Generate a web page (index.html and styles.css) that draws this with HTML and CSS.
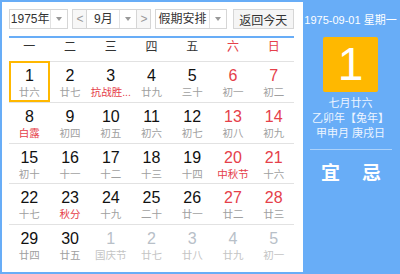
FILE: index.html
```html
<!DOCTYPE html>
<html lang="zh-CN">
<head>
    <meta charset="UTF-8">
    <title>万年历</title>
    <link rel="stylesheet" href="styles.css">
</head>
<body>
    <div class="calendar">
        <div class="main">
            <div class="toolbar">
                <div class="select year">
                    <span class="select-text">1975年</span>
                    <span class="select-arrow"><i></i></span>
                </div>
                <div class="month-group">
                    <span class="nav">&lt;</span>
                    <div class="select month">
                        <span class="select-text">9月</span>
                        <span class="select-arrow"><i></i></span>
                    </div>
                    <span class="nav">&gt;</span>
                </div>
                <div class="select holiday">
                    <span class="select-text">假期安排</span>
                    <span class="select-arrow"><i></i></span>
                </div>
                <button class="today-btn">返回今天</button>
            </div>
            <div class="weekdays">
                <span>一</span><span>二</span><span>三</span><span>四</span><span>五</span>
                <span class="red">六</span><span class="red">日</span>
            </div>
            <div class="days">
                <div class="day today"><b>1</b><small>廿六</small></div>
                <div class="day"><b>2</b><small>廿七</small></div>
                <div class="day"><b>3</b><small class="fest">抗战胜...</small></div>
                <div class="day"><b>4</b><small>廿九</small></div>
                <div class="day"><b>5</b><small>三十</small></div>
                <div class="day weekend"><b>6</b><small>初一</small></div>
                <div class="day weekend"><b>7</b><small>初二</small></div>

                <div class="day"><b>8</b><small class="fest">白露</small></div>
                <div class="day"><b>9</b><small>初四</small></div>
                <div class="day"><b>10</b><small>初五</small></div>
                <div class="day"><b>11</b><small>初六</small></div>
                <div class="day"><b>12</b><small>初七</small></div>
                <div class="day weekend"><b>13</b><small>初八</small></div>
                <div class="day weekend"><b>14</b><small>初九</small></div>

                <div class="day"><b>15</b><small>初十</small></div>
                <div class="day"><b>16</b><small>十一</small></div>
                <div class="day"><b>17</b><small>十二</small></div>
                <div class="day"><b>18</b><small>十三</small></div>
                <div class="day"><b>19</b><small>十四</small></div>
                <div class="day weekend"><b>20</b><small class="fest">中秋节</small></div>
                <div class="day weekend"><b>21</b><small>十六</small></div>

                <div class="day"><b>22</b><small>十七</small></div>
                <div class="day"><b>23</b><small class="fest">秋分</small></div>
                <div class="day"><b>24</b><small>十九</small></div>
                <div class="day"><b>25</b><small>二十</small></div>
                <div class="day"><b>26</b><small>廿一</small></div>
                <div class="day weekend"><b>27</b><small>廿二</small></div>
                <div class="day weekend"><b>28</b><small>廿三</small></div>

                <div class="day"><b>29</b><small>廿四</small></div>
                <div class="day"><b>30</b><small>廿五</small></div>
                <div class="day other"><b>1</b><small>国庆节</small></div>
                <div class="day other"><b>2</b><small>廿七</small></div>
                <div class="day other"><b>3</b><small>廿八</small></div>
                <div class="day other"><b>4</b><small>廿九</small></div>
                <div class="day other"><b>5</b><small>初一</small></div>
            </div>
        </div>
        <div class="side">
            <div class="side-date">1975-09-01 星期一</div>
            <div class="side-day">1</div>
            <div class="side-lunar">
                <p>七月廿六</p>
                <p>乙卯年【兔年】</p>
                <p>甲申月 庚戌日</p>
            </div>
            <div class="side-yiji">
                <span>宜</span>
                <span>忌</span>
            </div>
        </div>
    </div>
</body>
</html>
```
FILE: styles.css
```css
* {
    box-sizing: border-box;
}
body {
    margin: 0;
    font-family: "Liberation Sans", Arial, "Noto Sans CJK SC", sans-serif;
    background: #fff;
}
.calendar {
    display: flex;
    width: 400px;
    height: 274px;
    border: 2px solid #68adf7;
    background: #68adf7;
}
.main {
    width: 301px;
    background: #fff;
    padding: 7px 9px 0 7px;
}
.toolbar {
    display: flex;
    height: 29px;
    border-bottom: 2px solid #68adf7;
}
.select, .nav, .today-btn {
    height: 20px;
    border: 1px solid #d6d6d6;
    font-size: 12px;
    color: #333;
    background: #fff;
}
.select {
    display: flex;
}
.select-text {
    flex: 1;
    line-height: 18px;
    text-align: center;
}
.select-arrow {
    width: 17px;
    border-left: 1px solid #e2e2e2;
    display: flex;
    align-items: center;
    justify-content: center;
}
.select-arrow i {
    width: 0;
    height: 0;
    border-left: 3px solid transparent;
    border-right: 3px solid transparent;
    border-top: 4px solid #999;
}
.year {
    width: 60px;
}
.month-group {
    display: flex;
    margin-left: 4px;
}
.nav {
    width: 15px;
    line-height: 18px;
    text-align: center;
    color: #999;
    background: #f7f7f7;
}
.month {
    width: 49px;
    border-left: none;
    border-right: none;
}
.holiday {
    width: 72px;
    margin-left: 4px;
}
.today-btn {
    width: 62px;
    margin-left: 6px;
    padding: 0;
    background: #f5f5f5;
    font-family: inherit;
}
.weekdays {
    display: grid;
    grid-template-columns: repeat(7, 1fr);
    height: 23px;
    line-height: 18px;
    font-size: 12px;
    color: #333;
    text-align: center;
}
.weekdays .red {
    color: #e5404a;
}
.days {
    display: grid;
    grid-template-columns: repeat(7, 1fr);
    grid-template-rows: repeat(5, 40.75px);
}
.day {
    border-top: 1px solid #e2e2e2;
    text-align: center;
    padding-top: 4px;
}
.day b {
    display: block;
    font-weight: normal;
    font-size: 16px;
    line-height: 19px;
    color: #111;
}
.day small {
    display: block;
    font-size: 10.5px;
    line-height: 14px;
    color: #a0a0a0;
}
.day small.fest {
    color: #e5404a;
}
.day.weekend b {
    color: #e5404a;
}
.day.other b {
    color: #b8c0c8;
}
.day.other small {
    color: #c4c4c4;
}
.day.today {
    border: 2px solid #ffb800;
    padding-top: 3px;
}
.side {
    flex: 1;
    color: #fff;
    text-align: center;
    padding-top: 11px;
}
.side-date {
    font-size: 11px;
    line-height: 14px;
}
.side-day {
    width: 55px;
    height: 55px;
    margin: 10px auto 0;
    background: #ffb800;
    border-radius: 2px;
    font-size: 46px;
    line-height: 55px;
}
.side-lunar {
    margin-top: 4px;
    font-size: 11px;
    color: #eef5ff;
}
.side-lunar p {
    margin: 0;
    line-height: 15px;
}
.side-yiji {
    margin: 8px 6px 0 7px;
    padding-top: 8px;
    border-top: 1px solid rgba(255, 255, 255, 0.45);
    display: flex;
    justify-content: center;
    gap: 22px;
    font-size: 19px;
    font-weight: bold;
}
```
